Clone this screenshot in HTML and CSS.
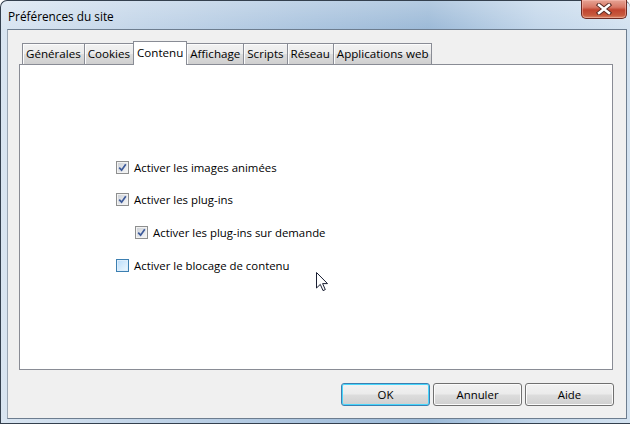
FILE: index.html
```html
<!DOCTYPE html>
<html lang="fr">
<head>
<meta charset="utf-8">
<title>Préférences du site</title>
<link rel="stylesheet" href="styles.css">
</head>
<body>
<div class="window">
  <div class="titlebar">
    <span class="title">Préférences du site</span>
    <div class="close">
      <svg width="18" height="12" viewBox="0 0 18 12">
        <path d="M4 2 L14 10 M14 2 L4 10" stroke="#5a2b24" stroke-width="4.4" stroke-linecap="square" fill="none"/>
        <path d="M4 2 L14 10 M14 2 L4 10" stroke="#ffffff" stroke-width="2.4" stroke-linecap="square" fill="none"/>
      </svg>
    </div>
  </div>
  <div class="client">
    <div class="tabs">
      <div class="tab first">Générales</div>
      <div class="tab">Cookies</div>
      <div class="tab active">Contenu</div>
      <div class="tab">Affichage</div>
      <div class="tab">Scripts</div>
      <div class="tab">Réseau</div>
      <div class="tab">Applications web</div>
    </div>
    <div class="panel">
      <div class="options">
        <div class="opt"><span class="cb checked"><svg width="9" height="9" viewBox="0 0 9 9"><path d="M1.2 4.6 L3.6 7.2 L7.8 1.2" stroke="#3d5a9a" stroke-width="1.7" fill="none"/></svg></span><span>Activer les images animées</span></div>
        <div class="opt"><span class="cb checked"><svg width="9" height="9" viewBox="0 0 9 9"><path d="M1.2 4.6 L3.6 7.2 L7.8 1.2" stroke="#3d5a9a" stroke-width="1.7" fill="none"/></svg></span><span>Activer les plug-ins</span></div>
        <div class="opt sub"><span class="cb checked"><svg width="9" height="9" viewBox="0 0 9 9"><path d="M1.2 4.6 L3.6 7.2 L7.8 1.2" stroke="#3d5a9a" stroke-width="1.7" fill="none"/></svg></span><span>Activer les plug-ins sur demande</span></div>
        <div class="opt"><span class="cb hover"></span><span>Activer le blocage de contenu</span></div>
      </div>
    </div>
    <div class="buttons">
      <button class="btn default">OK</button>
      <button class="btn">Annuler</button>
      <button class="btn">Aide</button>
    </div>
  </div>
  <svg class="cursor" width="13" height="20" viewBox="0 0 13 20">
    <path d="M0.5 0.5 L0.5 16 L4.3 12.4 L7 18.6 L9.3 17.6 L6.6 11.6 L11.5 11.6 Z" fill="#ffffff" stroke="#1a1f33" stroke-width="1"/>
  </svg>
</div>
</body>
</html>
```
FILE: styles.css
```css
html, body {
  margin: 0;
  padding: 0;
}
body {
  width: 630px;
  height: 424px;
  overflow: hidden;
  font-family: "Segoe UI", "Open Sans", "Noto Sans", sans-serif;
  font-size: 11.4px;
  color: #000;
}
.window {
  position: relative;
  box-sizing: border-box;
  width: 630px;
  height: 424px;
  border: 1px solid #34404e;
  border-right: none;
  border-radius: 7px 7px 0 0;
  background:
    linear-gradient(to bottom, rgba(255,255,255,0.25), rgba(255,255,255,0) 30px),
    linear-gradient(to right, #d9e5f1 0%, #c4d6e9 20%, #a9c3de 50%, #9bb9d7 68%, #c2d6ea 85%, #d3e2f0 100%);
  display: flex;
  flex-direction: column;
}
.titlebar {
  height: 28px;
  display: flex;
  align-items: flex-start;
  position: relative;
}
.title {
  margin: 7px 0 0 7px;
  font-size: 11.8px;
  color: #000;
}
.close {
  position: absolute;
  right: 3px;
  top: -1px;
  width: 46px;
  height: 19px;
  box-sizing: border-box;
  border: 1px solid #6d2a22;
  border-top: none;
  border-radius: 0 0 5px 5px;
  background: linear-gradient(to bottom, #e6a495 0%, #d87866 40%, #c0442f 55%, #c85a3e 85%, #d98a6a 100%);
  box-shadow: inset 0 0 0 1px rgba(255,200,190,0.45);
  display: flex;
  align-items: center;
  justify-content: center;
}
.client {
  flex: 1;
  margin: 0 3px 4px 6px;
  border: 1px solid #6d7d8f;
  border-left-color: #9aa6b3;
  background: #f0f0f0;
  padding: 11px 13px 0 11px;
  display: flex;
  flex-direction: column;
}
.tabs {
  display: flex;
  align-items: flex-end;
  height: 23px;
  padding-left: 3px;
  position: relative;
  z-index: 1;
}
.tab {
  box-sizing: border-box;
  height: 21px;
  padding: 0 3px;
  border: 1px solid #898c95;
  border-bottom: none;
  margin-left: -1px;
  background: linear-gradient(to bottom, #f2f2f2 0%, #ebebeb 50%, #dddddd 51%, #cfcfcf 100%);
  box-shadow: inset 1px 1px 0 #fcfcfc;
  display: flex;
  align-items: center;
  line-height: 1;
  white-space: nowrap;
  font-size: 11.6px;
}
.tab.first {
  margin-left: 0;
}
.tab.active {
  height: 24px;
  margin-bottom: -1px;
  background: #ffffff;
  box-shadow: none;
  padding-bottom: 2px;
  position: relative;
  z-index: 2;
}
.panel {
  box-sizing: border-box;
  height: 306px;
  border: 1px solid #898c95;
  background: #ffffff;
  padding: 93px 0 0 96px;
}
.options {
  display: flex;
  flex-direction: column;
  gap: 14.7px;
}
.opt {
  height: 18px;
  display: flex;
  align-items: center;
  gap: 5px;
  white-space: nowrap;
}
.opt.sub {
  padding-left: 19px;
}
.cb {
  box-sizing: border-box;
  width: 13px;
  height: 13px;
  border: 1px solid #8e8f8f;
  background: #f4f4f4;
  display: flex;
  align-items: center;
  justify-content: center;
  flex: none;
}
.cb.checked {
  background: linear-gradient(135deg, #cbcfd5 0%, #e6e8eb 60%, #f7f7f7 100%);
  box-shadow: inset 0 0 0 1px #f2f2f2;
}
.cb.hover {
  border-color: #3c7fb1;
  background: linear-gradient(135deg, #b9dcfb 0%, #daeefd 60%, #eef8ff 100%);
  box-shadow: inset 0 0 0 1px #ddeefc;
}
.buttons {
  margin-top: 13px;
  display: flex;
  justify-content: flex-end;
  gap: 3px;
  margin-right: -1px;
}
.btn {
  box-sizing: border-box;
  width: 89px;
  height: 23px;
  border: 1px solid #707070;
  border-radius: 3px;
  background: linear-gradient(to bottom, #f2f2f2 0%, #ebebeb 48%, #dddddd 52%, #cfcfcf 100%);
  box-shadow: inset 0 0 0 1px #fbfbfb;
  font-family: inherit;
  font-size: 11.4px;
  color: #000;
  padding: 0;
  margin: 0;
}
.btn.default {
  border-color: #3c7fb1;
  box-shadow: inset 0 0 0 1px #48d5fb;
}
.cursor {
  position: absolute;
  left: 315px;
  top: 271px;
}
```
